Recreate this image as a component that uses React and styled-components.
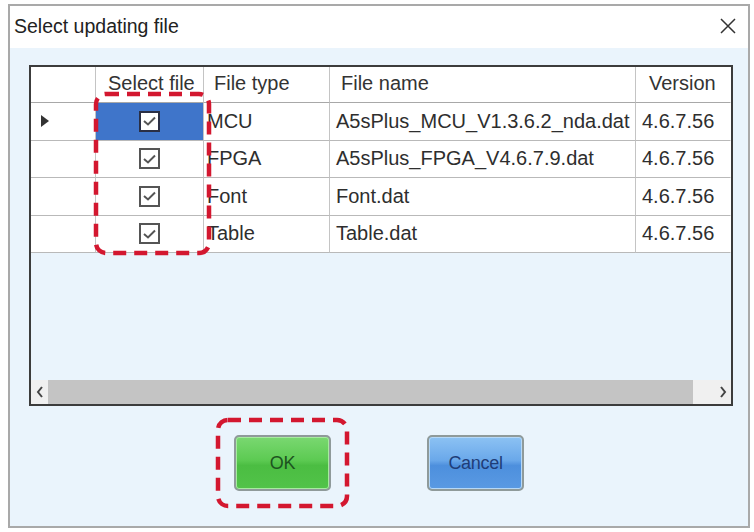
import React from 'react'
import styled, { createGlobalStyle } from 'styled-components'

const GlobalStyle = createGlobalStyle`
  * { box-sizing: border-box; }
  html, body { margin: 0; padding: 0; background: #ffffff; }
  body { font-family: "Liberation Sans", Arial, sans-serif; }
`

const Window = styled.div`
  margin: 4px 0 0 8px;
  width: 742px;
  height: 524px;
  border: 2px solid #a9a9a9;
  display: flex;
  flex-direction: column;
  background: #eaf4fc;
`

const TitleBar = styled.div`
  height: 42px;
  background: #ffffff;
  display: flex;
  align-items: center;
  justify-content: space-between;
  padding: 0 12px 2px 4px;
`

const Title = styled.span`
  font-size: 19.5px;
  color: #222;
`

const Close = styled.svg`
  width: 16px;
  height: 16px;
`

const Client = styled.div`
  flex: 1;
  display: flex;
  flex-direction: column;
  padding: 17px 15px 0 19px;
`

const Grid = styled.div`
  width: 704px;
  height: 341px;
  border: 2px solid #3c3c3c;
  display: flex;
  flex-direction: column;
  position: relative;
  background: #eaf4fc;
`

const Row = styled.div`
  display: grid;
  grid-template-columns: 65px 108px 126px 306px 95px;
  height: ${p => p.h}px;
  background: #ffffff;
`

const Cell = styled.div`
  border-right: 1px solid ${p => (p.last ? 'transparent' : '#c4c4c4')};
  border-bottom: 1px solid #b9b9b9;
  display: flex;
  align-items: center;
  justify-content: ${p => (p.center ? 'center' : 'flex-start')};
  padding-left: ${p => (p.center ? 0 : p.pad || 0)}px;
  font-size: 20px;
  color: #2e2e2e;
  white-space: nowrap;
  overflow: hidden;
  background: ${p => (p.selected ? '#3f75ca' : '#ffffff')};
`

const HeadCell = styled(Cell)`
  color: #333;
  border-bottom: 1px solid #a8a8a8;
  padding-bottom: 2px;
`

const Arrow = styled.span`
  width: 0;
  height: 0;
  border-top: 6px solid transparent;
  border-bottom: 6px solid transparent;
  border-left: 8px solid #333;
  margin-left: 10px;
`

const Check = styled.div`
  width: 21px;
  height: 21px;
  border: 2px solid ${p => (p.selected ? '#2a2f45' : '#555')};
  background: #ffffff;
  display: flex;
  align-items: center;
  justify-content: center;
`

const Empty = styled.div`
  flex: 1;
`

const ScrollBar = styled.div`
  height: 24px;
  background: #f0f0f0;
  display: flex;
  align-items: center;
`

const ScrollArrow = styled.div`
  width: 17px;
  height: 100%;
  display: flex;
  align-items: center;
  justify-content: center;
`

const Thumb = styled.div`
  width: 645px;
  height: 100%;
  background: #c4c4c4;
`

const Annotation = styled.svg`
  position: absolute;
  pointer-events: none;
  overflow: visible;
`

const Buttons = styled.div`
  display: flex;
  justify-content: center;
  gap: 96px;
  margin-top: 29px;
  padding-right: 4px;
`

const ButtonWrap = styled.div`
  position: relative;
`

const Button = styled.button`
  width: 97px;
  height: 56px;
  border: 2px solid #8f9a9a;
  border-radius: 5px;
  font-family: "Liberation Sans", Arial, sans-serif;
  font-size: 18px;
  letter-spacing: -0.3px;
  color: ${p => (p.green ? '#1d5420' : '#1f3d78')};
  background: ${p =>
    p.green
      ? 'linear-gradient(#7ad871 0%, #5cca52 45%, #4bbd42 55%, #52c349 100%)'
      : 'linear-gradient(#8cc2f3 0%, #6aa8ea 45%, #4d8fdd 55%, #5a9ae3 100%)'};
  box-shadow: inset 0 0 0 1px ${p => (p.green ? '#a7eba0' : '#b5d8f7')};
`

function CheckMark() {
  return (
    <svg width="13" height="10" viewBox="0 0 13 10">
      <path d="M1 5 L5 8.5 L12 1.5" fill="none" stroke="#555" strokeWidth="2" />
    </svg>
  )
}

function DashedBox({ left, top, width, height }) {
  return (
    <Annotation style={{ left, top }} width={width} height={height}>
      <rect
        x="2"
        y="2"
        width={width - 4}
        height={height - 4}
        rx="10"
        fill="none"
        stroke="#d3172f"
        strokeWidth="4.5"
        strokeDasharray="13 8"
      />
    </Annotation>
  )
}

const rows = [
  { type: 'MCU', name: 'A5sPlus_MCU_V1.3.6.2_nda.dat', version: '4.6.7.56', current: true },
  { type: 'FPGA', name: 'A5sPlus_FPGA_V4.6.7.9.dat', version: '4.6.7.56' },
  { type: 'Font', name: 'Font.dat', version: '4.6.7.56' },
  { type: 'Table', name: 'Table.dat', version: '4.6.7.56' },
]

export default function App() {
  return (
    <Window>
      <GlobalStyle />
      <TitleBar>
        <Title>Select updating file</Title>
        <Close viewBox="0 0 16 16">
          <path d="M1 1 L15 15 M15 1 L1 15" stroke="#333" strokeWidth="1.5" />
        </Close>
      </TitleBar>
      <Client>
        <Grid>
          <Row h={36}>
            <HeadCell />
            <HeadCell pad={12}>Select file</HeadCell>
            <HeadCell pad={10}>File type</HeadCell>
            <HeadCell pad={11}>File name</HeadCell>
            <HeadCell pad={13} last>Version</HeadCell>
          </Row>
          {rows.map(r => (
            <Row h={37.5} key={r.type}>
              <Cell>{r.current && <Arrow />}</Cell>
              <Cell center selected={r.current}>
                <Check selected={r.current}>
                  <CheckMark />
                </Check>
              </Cell>
              <Cell pad={3}>{r.type}</Cell>
              <Cell pad={6}>{r.name}</Cell>
              <Cell pad={6} last>{r.version}</Cell>
            </Row>
          ))}
          <Empty />
          <ScrollBar>
            <ScrollArrow>
              <svg width="8" height="12" viewBox="0 0 8 12">
                <path d="M6 1 L2 6 L6 11" fill="none" stroke="#444" strokeWidth="2" />
              </svg>
            </ScrollArrow>
            <Thumb />
            <Empty />
            <ScrollArrow>
              <svg width="8" height="12" viewBox="0 0 8 12">
                <path d="M2 1 L6 6 L2 11" fill="none" stroke="#444" strokeWidth="2" />
              </svg>
            </ScrollArrow>
          </ScrollBar>
          <DashedBox left={63} top={25} width={117} height={163} />
        </Grid>
        <Buttons>
          <ButtonWrap>
            <Button green>OK</Button>
            <DashedBox left={-18} top={-17} width={133} height={90} />
          </ButtonWrap>
          <ButtonWrap>
            <Button>Cancel</Button>
          </ButtonWrap>
        </Buttons>
      </Client>
    </Window>
  )
}
